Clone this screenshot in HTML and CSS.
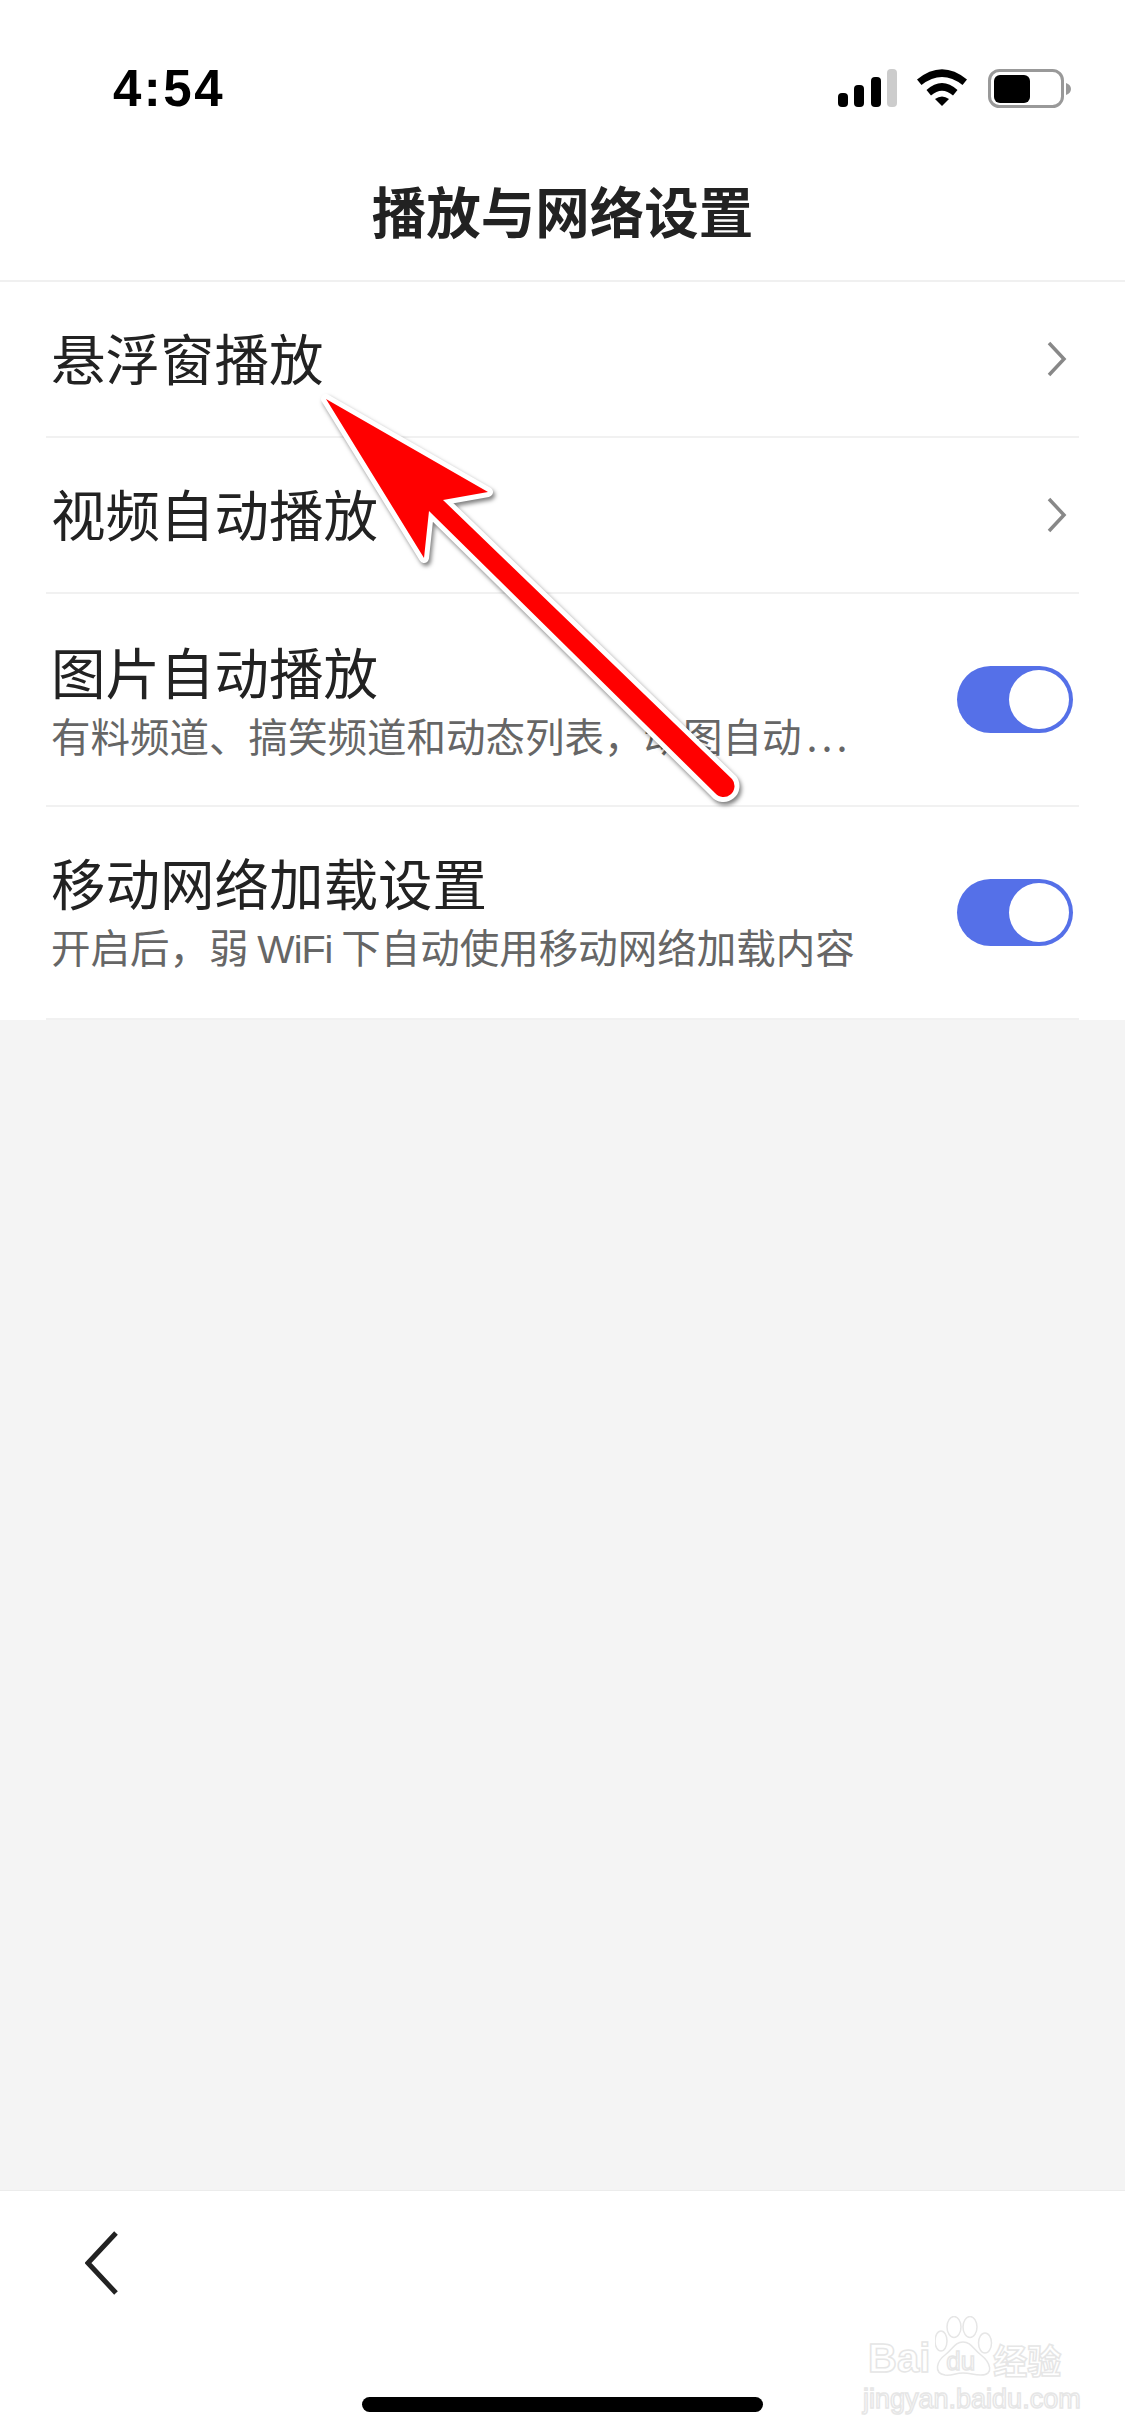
FILE: index.html
```html
<!DOCTYPE html>
<html lang="zh-CN">
<head>
  <meta charset="UTF-8">
  <title>播放与网络设置</title>
  <link rel="stylesheet" href="styles.css">
</head>
<body>
  <div class="page">
    <div class="status-bar">
      <span class="time">4:54</span>
      <div class="status-icons">
        <svg class="signal" width="59" height="38" viewBox="0 0 59 38">
          <rect x="0" y="24" width="10" height="14" rx="4" fill="#000"/>
          <rect x="16" y="16" width="10" height="22" rx="4" fill="#000"/>
          <rect x="33" y="8" width="10" height="30" rx="4" fill="#000"/>
          <rect x="49" y="0" width="10" height="38" rx="4" fill="#ccc"/>
        </svg>
        <svg class="wifi" width="50" height="37" viewBox="0 0 50 37">
          <path d="M0 10.5Q25 -10 50 10.5L45.5 16Q25 0 4.500 16Z" fill="#000"/>
          <path d="M9.500 21Q25 7 40.500 21L36 26.500Q25 17 14 26.500Z" fill="#000"/>
          <path d="M18 30Q25 25 32 30L25 37Z" fill="#000"/>
        </svg>
        <svg class="battery" width="84" height="40" viewBox="0 0 84 40">
          <rect x="1.500" y="1.500" width="73" height="36" rx="10" fill="none" stroke="#999" stroke-width="3"/>
          <rect x="6" y="6" width="36" height="28" rx="6" fill="#000"/>
          <path d="M78 14C81 15 83 17 83 20C83 23 81 25 78 26Z" fill="#999"/>
        </svg>
      </div>
    </div>
    <header class="nav-bar">播放与网络设置</header>

    <div class="list">
      <div class="row row-link">
        <span class="row-title">悬浮窗播放</span>
        <svg class="chevron" width="20" height="36" viewBox="0 0 20 36">
          <path d="M2 2L17 18L2 34" fill="none" stroke="#888" stroke-width="3.500"/>
        </svg>
      </div>
      <div class="row row-link">
        <span class="row-title">视频自动播放</span>
        <svg class="chevron" width="20" height="36" viewBox="0 0 20 36">
          <path d="M2 2L17 18L2 34" fill="none" stroke="#888" stroke-width="3.500"/>
        </svg>
      </div>
      <div class="row row-switch">
        <div class="row-text">
          <span class="row-title">图片自动播放</span>
          <span class="row-sub">有料频道、搞笑频道和动态列表，动图自动<span class="dots">...</span></span>
        </div>
        <div class="toggle"><div class="knob"></div></div>
      </div>
      <div class="row row-switch">
        <div class="row-text">
          <span class="row-title">移动网络加载设置</span>
          <span class="row-sub">开启后，弱 <span class="latin">WiFi</span> 下自动使用移动网络加载内容</span>
        </div>
        <div class="toggle"><div class="knob"></div></div>
      </div>
    </div>

    <div class="empty"></div>

    <footer class="bottom-bar">
      <svg class="back" width="34" height="64" viewBox="0 0 34 64">
        <path d="M31 2L3 32L31 62" fill="none" stroke="#222" stroke-width="5"/>
      </svg>
      <div class="home-bar"></div>
    </footer>

    <!-- annotation pasted on top of the screenshot -->
    <svg class="arrow" width="1125" height="2436" viewBox="0 0 1125 2436">
      <path d="M326 399L488 492L443 500L732 779A11 11 0 0 1 715 793L429 511L424 558Z" fill="#f00" stroke="#fff" stroke-width="10" stroke-linejoin="round" paint-order="stroke"/>
    </svg>

    <div class="watermark">
      <div class="wm-logo">
        <span class="wm-word">Bai</span>
        <span class="wm-paw">
          <svg width="58" height="61" viewBox="0 0 58 61">
            <g fill="#fff" stroke="#e6e6e6" stroke-width="1.500">
              <ellipse cx="6" cy="25" rx="6" ry="10"/>
              <ellipse cx="19" cy="11" rx="7" ry="10.500"/>
              <ellipse cx="35" cy="11" rx="7" ry="10.500"/>
              <ellipse cx="50" cy="27" rx="6.500" ry="10"/>
              <path d="M28 26C36 26 38 33 46 39C55 46 60 59 46 59C38 59 36 57 28 57C20 57 17 60 10 59C-2 57 2 45 10 39C18 33 20 26 28 26Z"/>
            </g>
          </svg>
          <span class="wm-du">du</span>
        </span>
        <span class="wm-cn">经验</span>
      </div>
      <div class="wm-url">jingyan.baidu.com</div>
    </div>
  </div>
</body>
</html>
```

FILE: styles.css
```css
* {
  box-sizing: border-box;
}
body {
  margin: 0;
  background: #fff;
  color: #222;
  font-family: "Noto Sans CJK SC", "Liberation Sans", sans-serif;
}
.page {
  position: relative;
  width: 1125px;
  height: 2436px;
  display: flex;
  flex-direction: column;
  overflow: hidden;
}
.status-bar {
  height: 140px;
  padding: 70px 53px 0 113px;
  display: flex;
  justify-content: space-between;
  align-items: flex-start;
}
.time {
  font-family: "Liberation Sans", sans-serif;
  font-size: 51px;
  font-weight: 700;
  line-height: 38px;
  letter-spacing: 2.500px;
  color: #000;
}
.status-icons {
  display: flex;
  align-items: flex-start;
  gap: 20px;
  margin-top: -1px;
}
.status-icons svg {
  display: block;
}
.battery {
  margin-left: 1px;
}
.nav-bar {
  height: 142px;
  padding-bottom: 2px;
  display: flex;
  justify-content: center;
  align-items: center;
  font-size: 54.500px;
  font-weight: 700;
  border-bottom: 2px solid #f0f0f0;
}
.list {
  padding: 0 46px;
}
.row {
  display: flex;
  justify-content: space-between;
  align-items: center;
  padding: 0 6px 0 5px;
  border-bottom: 2px solid #f1f1f1;
}
.row-link {
  height: 156px;
  padding-right: 12px;
}
.row-switch {
  height: 213px;
}
.row-title {
  display: block;
  font-size: 54.500px;
  line-height: 72px;
  margin-top: -4px;
}
.row-text {
  display: flex;
  flex-direction: column;
}
.row-sub {
  font-size: 39.500px;
  line-height: 52px;
  margin-top: 2px;
  color: #666;
}
.latin {
  font-family: "Liberation Sans", sans-serif;
  letter-spacing: -1px;
}
.dots {
  margin-left: 5px;
  letter-spacing: 4px;
}
.chevron {
  display: block;
}
.toggle {
  width: 116px;
  height: 67px;
  padding: 4px;
  display: flex;
  justify-content: flex-end;
  border-radius: 34px;
  background: #5570e8;
}
.knob {
  width: 60px;
  height: 59px;
  border-radius: 50%;
  background: #fff;
}
.empty {
  flex: 1;
  background: #f4f4f4;
}
.bottom-bar {
  height: 246px;
  padding: 40px 0 24px 85px;
  display: flex;
  flex-direction: column;
  justify-content: space-between;
  border-top: 1px solid #ececec;
}
.back {
  display: block;
}
.home-bar {
  width: 401px;
  height: 15px;
  margin-left: 277px;
  border-radius: 8px;
  background: #000;
}
.arrow {
  position: absolute;
  left: 0;
  top: 0;
  filter: drop-shadow(2px 3px 2px rgba(0, 0, 0, 0.5));
}
.watermark {
  position: absolute;
  left: 868px;
  top: 2316px;
  width: 200px;
  color: #fff;
  -webkit-text-stroke: 1.500px #e6e6e6;
}
.wm-logo {
  display: flex;
  align-items: flex-end;
  height: 61px;
  white-space: nowrap;
}
.wm-word {
  font-family: "Liberation Sans", sans-serif;
  font-size: 40px;
  font-weight: 700;
  line-height: 40px;
  margin-bottom: -1px;
}
.wm-paw {
  position: relative;
  flex: none;
  width: 58px;
  height: 61px;
  margin-left: 5px;
}
.wm-paw svg {
  display: block;
}
.wm-du {
  position: absolute;
  left: 11px;
  bottom: 3px;
  font-family: "Liberation Sans", sans-serif;
  font-size: 26px;
  line-height: 26px;
}
.wm-cn {
  flex: none;
  font-size: 34px;
  font-weight: 700;
  line-height: 34px;
}
.wm-url {
  margin: 9px 0 0 -5px;
  font-family: "Liberation Sans", sans-serif;
  font-size: 27px;
  line-height: 26px;
  white-space: nowrap;
}
```
